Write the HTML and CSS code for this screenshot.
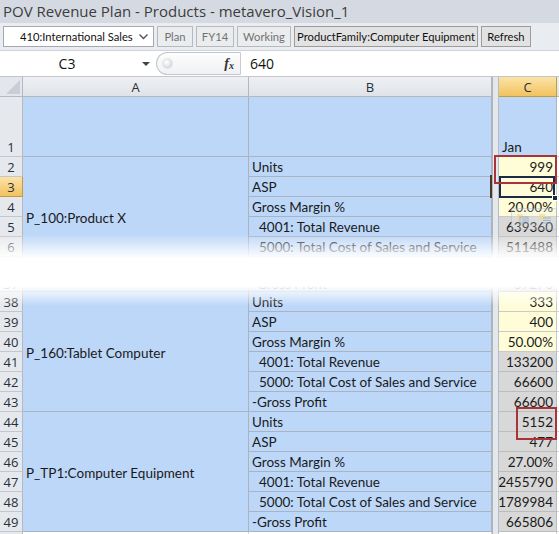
FILE: index.html
```html
<!DOCTYPE html>
<html>
<head>
<meta charset="utf-8">
<link rel="stylesheet" href="styles.css">
</head>
<body>
<div class="app">
  <div class="titlebar">POV Revenue Plan - Products - metavero_Vision_1</div>
  <div class="toolbar">
    <div class="select"><span class="select-text">410:International Sales</span><svg class="chev" width="9" height="6" viewBox="0 0 9 6"><polyline points="0.5,0.5 4.5,4.5 8.5,0.5" fill="none" stroke="#555" stroke-width="1.4"/></svg></div>
    <div class="btn dim w-plan">Plan</div>
    <div class="btn dim w-fy">FY14</div>
    <div class="btn dim w-work">Working</div>
    <div class="btn w-pf">ProductFamily:Computer Equipment</div>
    <div class="btn w-ref">Refresh</div>
  </div>
  <div class="formulabar">
    <div class="namebox"><span class="nb-text">C3</span><svg class="nb-caret" width="8" height="4" viewBox="0 0 8 4"><polygon points="0,0 8,0 4,4" fill="#444"/></svg></div>
    <div class="pill"><span class="dot"></span><span class="fx">f<sub>x</sub></span></div>
    <div class="formula">640</div>
  </div>
  <div class="sheet">
    <div class="grid top">
      <div class="split"></div>
      <div class="rh corner"><svg width="14" height="14" viewBox="0 0 14 14"><polygon points="14,0 14,14 0,14" fill="#c9ced6"/></svg></div>
      <div class="ca colhead">A</div>
      <div class="cb colhead">B</div>
      <div class="cc colhead sel">C</div>
      <div class="cx colhead extra"></div>

      <div class="rh rowhead">1</div>
      <div class="ca cell blue"></div>
      <div class="cb cell blue"></div>
      <div class="cc cell blue">Jan</div>
      <div class="cx cell extra"></div>

      <div class="rh rowhead">2</div>
      <div class="ca cell blue merged">P_100:Product X</div>
      <div class="cb cell blue">Units</div>
      <div class="cc cell yellow num">999</div>
      <div class="cx cell extra"></div>

      <div class="rh rowhead sel">3</div>
      <div class="cb cell blue">ASP</div>
      <div class="cc cell yellow num">640</div>
      <div class="cx cell extra"></div>

      <div class="rh rowhead">4</div>
      <div class="cb cell blue">Gross Margin %</div>
      <div class="cc cell yellow num">20.00%</div>
      <div class="cx cell extra"></div>

      <div class="rh rowhead">5</div>
      <div class="cb cell blue ind">4001: Total Revenue</div>
      <div class="cc cell gray num">639360</div>
      <div class="cx cell extra"></div>

      <div class="rh rowhead">6</div>
      <div class="cb cell blue ind">5000: Total Cost of Sales and Service</div>
      <div class="cc cell gray num">511488</div>
      <div class="cx cell extra"></div>

      <div class="rh rowhead">7</div>
      <div class="cb cell blue">-Gross Profit</div>
      <div class="cc cell gray num">127872</div>
      <div class="cx cell extra"></div>
    </div>

    <div class="grid bottom">
      <div class="split"></div>
      <div class="rh rowhead clip">37</div>
      <div class="ca cell blue"></div>
      <div class="cb cell blue clip">-Gross Profit</div>
      <div class="cc cell gray num clip">67270</div>
      <div class="cx cell extra"></div>

      <div class="rh rowhead">38</div>
      <div class="ca cell blue merged">P_160:Tablet Computer</div>
      <div class="cb cell blue">Units</div>
      <div class="cc cell yellow num">333</div>
      <div class="cx cell extra"></div>

      <div class="rh rowhead">39</div>
      <div class="cb cell blue">ASP</div>
      <div class="cc cell yellow num">400</div>
      <div class="cx cell extra"></div>

      <div class="rh rowhead">40</div>
      <div class="cb cell blue">Gross Margin %</div>
      <div class="cc cell yellow num">50.00%</div>
      <div class="cx cell extra"></div>

      <div class="rh rowhead">41</div>
      <div class="cb cell blue ind">4001: Total Revenue</div>
      <div class="cc cell gray num">133200</div>
      <div class="cx cell extra"></div>

      <div class="rh rowhead">42</div>
      <div class="cb cell blue ind">5000: Total Cost of Sales and Service</div>
      <div class="cc cell gray num">66600</div>
      <div class="cx cell extra"></div>

      <div class="rh rowhead">43</div>
      <div class="cb cell blue">-Gross Profit</div>
      <div class="cc cell gray num">66600</div>
      <div class="cx cell extra"></div>

      <div class="rh rowhead">44</div>
      <div class="ca cell blue merged">P_TP1:Computer Equipment</div>
      <div class="cb cell blue">Units</div>
      <div class="cc cell gray num">5152</div>
      <div class="cx cell extra"></div>

      <div class="rh rowhead">45</div>
      <div class="cb cell blue">ASP</div>
      <div class="cc cell gray num">477</div>
      <div class="cx cell extra"></div>

      <div class="rh rowhead">46</div>
      <div class="cb cell blue">Gross Margin %</div>
      <div class="cc cell gray num">27.00%</div>
      <div class="cx cell extra"></div>

      <div class="rh rowhead">47</div>
      <div class="cb cell blue ind">4001: Total Revenue</div>
      <div class="cc cell gray num">2455790</div>
      <div class="cx cell extra"></div>

      <div class="rh rowhead">48</div>
      <div class="cb cell blue ind">5000: Total Cost of Sales and Service</div>
      <div class="cc cell gray num">1789984</div>
      <div class="cx cell extra"></div>

      <div class="rh rowhead">49</div>
      <div class="cb cell blue">-Gross Profit</div>
      <div class="cc cell gray num">665806</div>
      <div class="cx cell extra"></div>

      <div class="rh rowhead">50</div>
      <div class="ca cell white"></div>
      <div class="cb cell white"></div>
      <div class="cc cell white"></div>
      <div class="cx cell extra"></div>
    </div>

    <div class="fade"></div>
    <div class="dragbar"></div>
    <div class="selbox"><span class="handle"></span></div>
    <div class="paste">
      <svg width="14" height="12" viewBox="0 0 14 12"><rect x="1" y="1" width="6" height="6" fill="#f0dc9a"/><rect x="4" y="4" width="8" height="6" fill="none" stroke="#8aa4c4"/><line x1="6" y1="6" x2="11" y2="6" stroke="#8aa4c4"/><line x1="6" y1="8" x2="11" y2="8" stroke="#8aa4c4"/></svg>
      <svg width="14" height="12" viewBox="0 0 14 12"><rect x="1" y="1" width="6" height="6" fill="#f0dc9a"/><line x1="5" y1="5" x2="13" y2="5" stroke="#8aa4c4"/><line x1="5" y1="7.5" x2="13" y2="7.5" stroke="#8aa4c4"/><line x1="5" y1="10" x2="13" y2="10" stroke="#8aa4c4"/></svg>
    </div>
    <div class="redbox r1"></div>
    <div class="redbox r2"></div>
  </div>
</div>
</body>
</html>
```
FILE: styles.css
```css
* { box-sizing: border-box; }
html, body { margin: 0; padding: 0; background: #fff; }
body { width: 559px; height: 534px; overflow: hidden; font-family: "Open Sans", "Noto Sans", sans-serif; }
.app { width: 559px; height: 534px; overflow: hidden; display: flex; flex-direction: column; }

.titlebar {
  height: 23px; flex: none; background: #d5dae2; color: #3d3d3d;
  font-size: 15px; line-height: 23px; padding-left: 3px; white-space: nowrap;
}
.toolbar {
  height: 28px; flex: none; background: #e9ecf0; display: flex; align-items: center;
  padding-left: 3px; gap: 3px; border-bottom: 1px solid #cfd3d9;
  font-family: "Lato", sans-serif;
}
.select {
  width: 151px; height: 21px; background: #fff; border: 1px solid #a4a9b0;
  display: flex; align-items: center; font-size: 11.2px; color: #111; white-space: nowrap;
}
.select-text { padding-left: 16px; flex: 1; }
.chev { margin-right: 5px; }
.btn {
  height: 21px; border: 1px solid #9c9c9c; background: #e2e2e2; color: #111;
  font-size: 11.2px; line-height: 19px; text-align: center; white-space: nowrap;
}
.btn.dim { color: #727272; border-color: #b6b9be; background: #eaecee; }
.w-plan { width: 36px; }
.w-fy { width: 38px; }
.w-work { width: 54px; }
.w-pf { width: 184px; }
.w-ref { width: 50px; }

.formulabar {
  height: 26px; flex: none; background: #fff; display: flex; align-items: stretch;
  border-bottom: 1px solid #c3c7cd;
}
.namebox { width: 156px; display: flex; align-items: center; font-size: 14px; color: #111; }
.nb-text { flex: 1; text-align: center; padding-right: 8px; }
.nb-caret { margin-right: 6px; }
.pill {
  width: 85px; margin: 1px 0; border: 1px solid #c2c6cc; border-right: 1px solid #c8ccd2;
  border-radius: 12px 0 0 12px; background: linear-gradient(#fdfdfd, #f0f1f3);
  display: flex; align-items: center; justify-content: space-between; padding: 0 6px 0 5px;
}
.dot { width: 11px; height: 11px; border-radius: 50%; background: radial-gradient(circle at 40% 35%, #fff, #d9dce0 70%); border: 1px solid #e0e2e6; }
.fx { font-family: "Liberation Serif", serif; font-style: italic; font-weight: bold; font-size: 14px; color: #333; }
.fx sub { font-size: 10px; vertical-align: -1px; }
.formula { flex: 1; font-size: 14px; color: #111; padding-left: 9px; display: flex; align-items: center; }

.sheet { position: relative; flex: 1; overflow: hidden; }
.grid {
  display: grid;
  grid-template-columns: 23px 226px 243px 7px 58px 1fr;
  font-family: "Lato", sans-serif; font-size: 13.5px; color: #1a1a1a;
}
.grid.top { grid-template-rows: 20px 60px repeat(6, 20px); }
.grid.bottom { grid-template-rows: 15px repeat(13, 20px); }

.rh { grid-column: 1; }
.ca { grid-column: 2; }
.cb { grid-column: 3; }
.cc { grid-column: 5; }
.cx { grid-column: 6; }
.split { grid-column: 4; grid-row: 1 / -1; background: #e4e7eb; border-left: 1px solid #aeb4bc; border-right: 1px solid #b6bcc4; }

.corner { background: #e3e6ea; border-right: 1px solid #b4b9c0; border-bottom: 1px solid #b4b9c0; display: flex; align-items: flex-end; justify-content: flex-end; padding: 0 2px 2px 0; }
.colhead {
  background: linear-gradient(#eef0f3, #dfe3e8); border-right: 1px solid #b4b9c0; border-bottom: 1px solid #b4b9c0;
  text-align: center; font-family: "Open Sans", sans-serif; font-size: 13px; line-height: 20px; color: #27313c;
}
.colhead.sel { background: linear-gradient(#fbe3a6, #f2c25f); border-color: #c29b47; }
.colhead.extra { border-right: 0; }
.rowhead {
  background: #e5e8ec; border-right: 1px solid #b4b9c0; border-bottom: 1px solid #c3c7cd;
  font-family: "Open Sans", sans-serif; font-size: 13px; color: #27313c;
  display: flex; align-items: flex-end; justify-content: center; line-height: 17px;
}
.rowhead.sel { background: linear-gradient(#fbe3a6, #f2c25f); border-color: #c29b47; }
.cell {
  border-right: 1px solid #aab3bf; border-bottom: 1px solid #aab3bf;
  display: flex; align-items: flex-end; padding: 0 3px; line-height: 17px; white-space: nowrap; overflow: hidden;
}
.clip { overflow: hidden; line-height: 14px; }
.cell.blue { background: #bdd7f8; }
.cell.yellow { background: #fefdd8; border-color: #c9c9c9; }
.cell.gray { background: #d8d8d8; border-color: #bcbcbc; }
.cell.white { background: #fff; border-color: #d4d4d4; }
.cell.num { justify-content: flex-end; }
.cell.ind { padding-left: 10px; }
.cell.extra { background: #fff; border-right: 0; border-color: #d4d4d4; }
.merged { grid-row: span 6; align-items: center; padding-top: 3px; }

.fade {
  position: absolute; left: 0; right: 0; top: 157px; height: 72px;
  background: linear-gradient(rgba(255,255,255,0) 0%, #fff 34%, #fff 72%, rgba(255,255,255,0) 100%);
}
.dragbar { position: absolute; left: 490px; top: 98px; width: 2px; height: 23px; background: #4a3823; }
.selbox { position: absolute; left: 499px; top: 99px; width: 56px; height: 22px; border: 2px solid #1c2a46; }
.handle { position: absolute; right: -5px; bottom: -5px; width: 6px; height: 6px; background: #1c2a46; border: 1px solid #fff; }
.paste {
  position: absolute; left: 511px; top: 131px; width: 46px; height: 22px; border: 1px solid rgba(150,160,175,0.45);
  background: rgba(235,238,242,0.35); border-radius: 2px; display: flex; align-items: center; justify-content: space-around; opacity: 0.7;
}
.redbox { position: absolute; border: 2px solid #a8343a; }
.r1 { left: 494px; top: 78px; width: 63px; height: 29px; }
.r2 { left: 516px; top: 330px; width: 41px; height: 33px; }
```
